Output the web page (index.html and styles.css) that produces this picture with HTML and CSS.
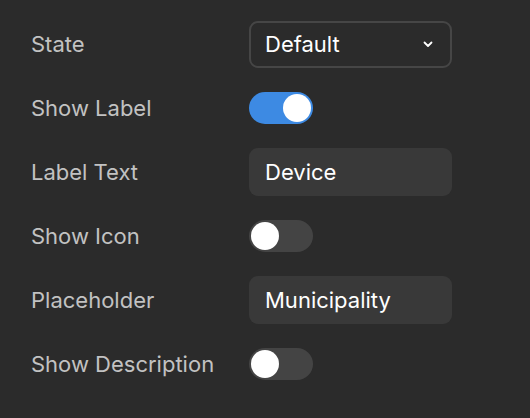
FILE: index.html
```html
<!DOCTYPE html>
<html>
<head>
<meta charset="utf-8">
<link rel="stylesheet" href="styles.css">
</head>
<body>
<div class="panel">
  <div class="row">
    <span class="label">State</span>
    <div class="select">
      <span>Default</span>
      <svg class="chev" width="10" height="8" viewBox="0 0 10 8"><path d="M1.5 2.5 L5 6 L8.5 2.5" fill="none" stroke="#ffffff" stroke-width="1.8" stroke-linecap="round" stroke-linejoin="round"/></svg>
    </div>
  </div>
  <div class="row">
    <span class="label">Show Label</span>
    <div class="toggle on"><div class="knob"></div></div>
  </div>
  <div class="row">
    <span class="label">Label Text</span>
    <div class="input">Device</div>
  </div>
  <div class="row">
    <span class="label">Show Icon</span>
    <div class="toggle"><div class="knob"></div></div>
  </div>
  <div class="row">
    <span class="label">Placeholder</span>
    <div class="input">Municipality</div>
  </div>
  <div class="row">
    <span class="label">Show Description</span>
    <div class="toggle"><div class="knob"></div></div>
  </div>
</div>
</body>
</html>
```
FILE: styles.css
```css
html, body {
  margin: 0;
  padding: 0;
  background: #2b2b2b;
}
body {
  width: 530px;
  height: 418px;
  font-family: Inter, "Noto Sans", sans-serif;
}
.panel {
  display: flex;
  flex-direction: column;
  gap: 16px;
  padding: 20px 0 0 31px;
}
.row {
  display: grid;
  grid-template-columns: 218px 203px;
  align-items: center;
  height: 48px;
}
.label {
  color: #c2c2c2;
  font-size: 22px;
}
.select {
  box-sizing: border-box;
  height: 47px;
  border: 2px solid #464646;
  border-radius: 9px;
  display: flex;
  align-items: center;
  justify-content: space-between;
  padding: 0 17px 0 14px;
  color: #ffffff;
  font-size: 22px;
}
.chev {
  display: block;
}
.input {
  box-sizing: border-box;
  height: 48px;
  border-radius: 9px;
  background: #393939;
  display: flex;
  align-items: center;
  padding: 0 16px;
  color: #ffffff;
  font-size: 22px;
}
.toggle {
  box-sizing: border-box;
  width: 64px;
  height: 32px;
  border-radius: 16px;
  background: #444444;
  padding: 2px;
  display: flex;
  justify-content: flex-start;
}
.toggle.on {
  background: #3d8ae3;
  justify-content: flex-end;
}
.knob {
  width: 28px;
  height: 28px;
  border-radius: 50%;
  background: #ffffff;
}
```
